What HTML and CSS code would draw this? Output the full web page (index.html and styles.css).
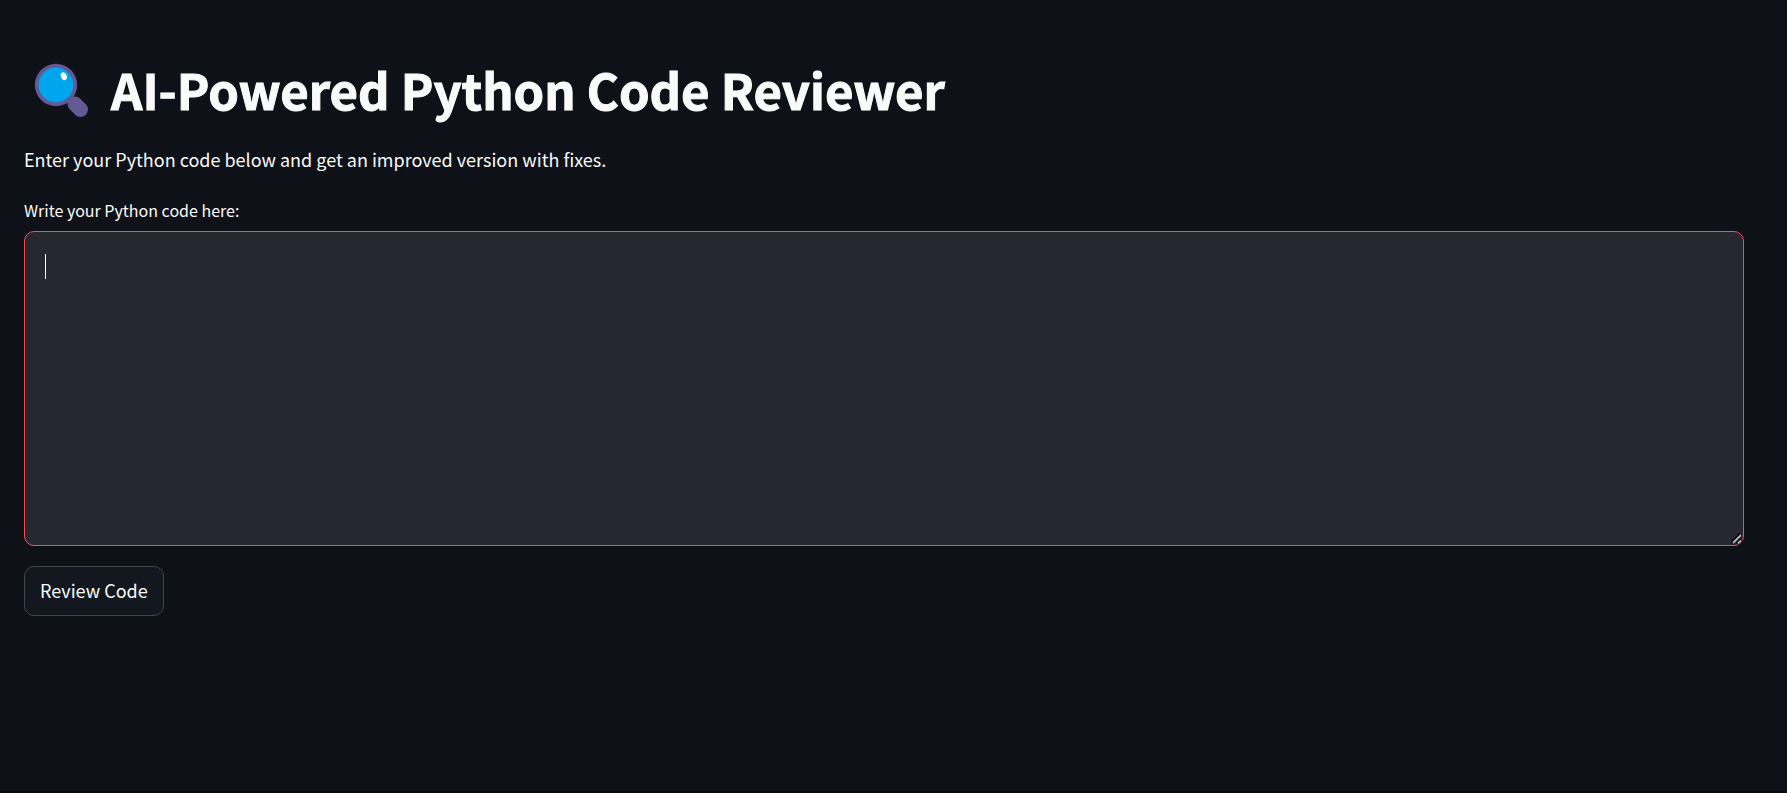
FILE: index.html
```
<!DOCTYPE html>
<html lang="en">
<head>
<meta charset="utf-8">
<title>AI-Powered Python Code Reviewer</title>
<link rel="stylesheet" href="styles.css">
</head>
<body>
<main class="app">
  <h1 class="title">
    <svg class="title-icon" viewBox="0 0 56 56" aria-hidden="true">
      <path d="M34 34l8 8" stroke="#635994" stroke-width="4"/>
      <path d="M41 41l5.500 5.500" stroke="#635994" stroke-width="15" stroke-linecap="round"/>
      <circle cx="22" cy="22" r="21.200" fill="#635994"/>
      <circle cx="22" cy="22" r="17.400" fill="#00a6ed"/>
      <ellipse cx="29.800" cy="13.200" rx="2.900" ry="4" transform="rotate(-25 29.800 13.200)" fill="#fff"/>
    </svg>
    <span class="title-text">AI-Powered Python Code Reviewer</span>
  </h1>
  <p class="intro">Enter your Python code below and get an improved version with fixes.</p>
  <form class="form">
    <label class="label" for="code">Write your Python code here:</label>
    <div class="field">
      <textarea class="editor" id="code"></textarea>
      <span class="caret"></span>
      <svg class="grip" viewBox="0 0 12 12" aria-hidden="true">
        <path d="M1 10L10 1M6 10.500L10 6.500" stroke="#0b0c12" stroke-width="4"/>
        <path d="M2 10L10 2M7 10.500L10 7.500" stroke="#b4b4b8" stroke-width="1.800"/>
      </svg>
    </div>
    <button class="button" type="button">Review Code</button>
  </form>
</main>
</body>
</html>
```
FILE: styles.css
```
* {
  box-sizing: border-box;
}

body {
  margin: 0;
  min-height: 100vh;
  background: #0e1117;
  border-bottom: 2px solid #0a0a14;
  color: #fafafa;
  font-family: "Noto Sans CJK JP", "Noto Sans", sans-serif;
  font-size: 18px;
  line-height: 32px;
}

.app {
  padding: 56px 43px 24px 24px;
}

.title {
  display: flex;
  align-items: center;
  gap: 21px;
  margin: 0;
  padding-left: 10px;
  font-size: 49px;
  font-weight: 700;
  line-height: 66px;
}

.title-text {
  -webkit-text-stroke: 1px #fafafa;
}

.title-icon {
  width: 56px;
  height: 56px;
  margin-top: 4px;
}

.intro {
  margin: 21px 0 20px;
}

.form {
  display: flex;
  flex-direction: column;
  align-items: flex-start;
}

.label {
  margin-bottom: 6px;
  font-size: 16px;
  line-height: 30px;
}

.field {
  position: relative;
  width: 100%;
  margin-bottom: 20px;
}

.editor {
  display: block;
  width: 100%;
  height: 315px;
  padding: 20px;
  border: 1px solid #ff4b4b;
  border-radius: 10px;
  outline: none;
  background: #262730;
  color: inherit;
  color-scheme: dark;
  caret-color: transparent;
  font: inherit;
  resize: vertical;
}

.editor::-webkit-resizer {
  background: transparent;
}

.caret {
  position: absolute;
  top: 23px;
  left: 21px;
  width: 1px;
  height: 25px;
  background: #fafafa;
  pointer-events: none;
}

.grip {
  position: absolute;
  right: 1px;
  bottom: 1px;
  width: 12px;
  height: 12px;
  pointer-events: none;
}

.button {
  padding: 7px 15px 9px;
  border: 1px solid #41444c;
  border-radius: 10px;
  background: #131720;
  color: inherit;
  font: inherit;
}
```
